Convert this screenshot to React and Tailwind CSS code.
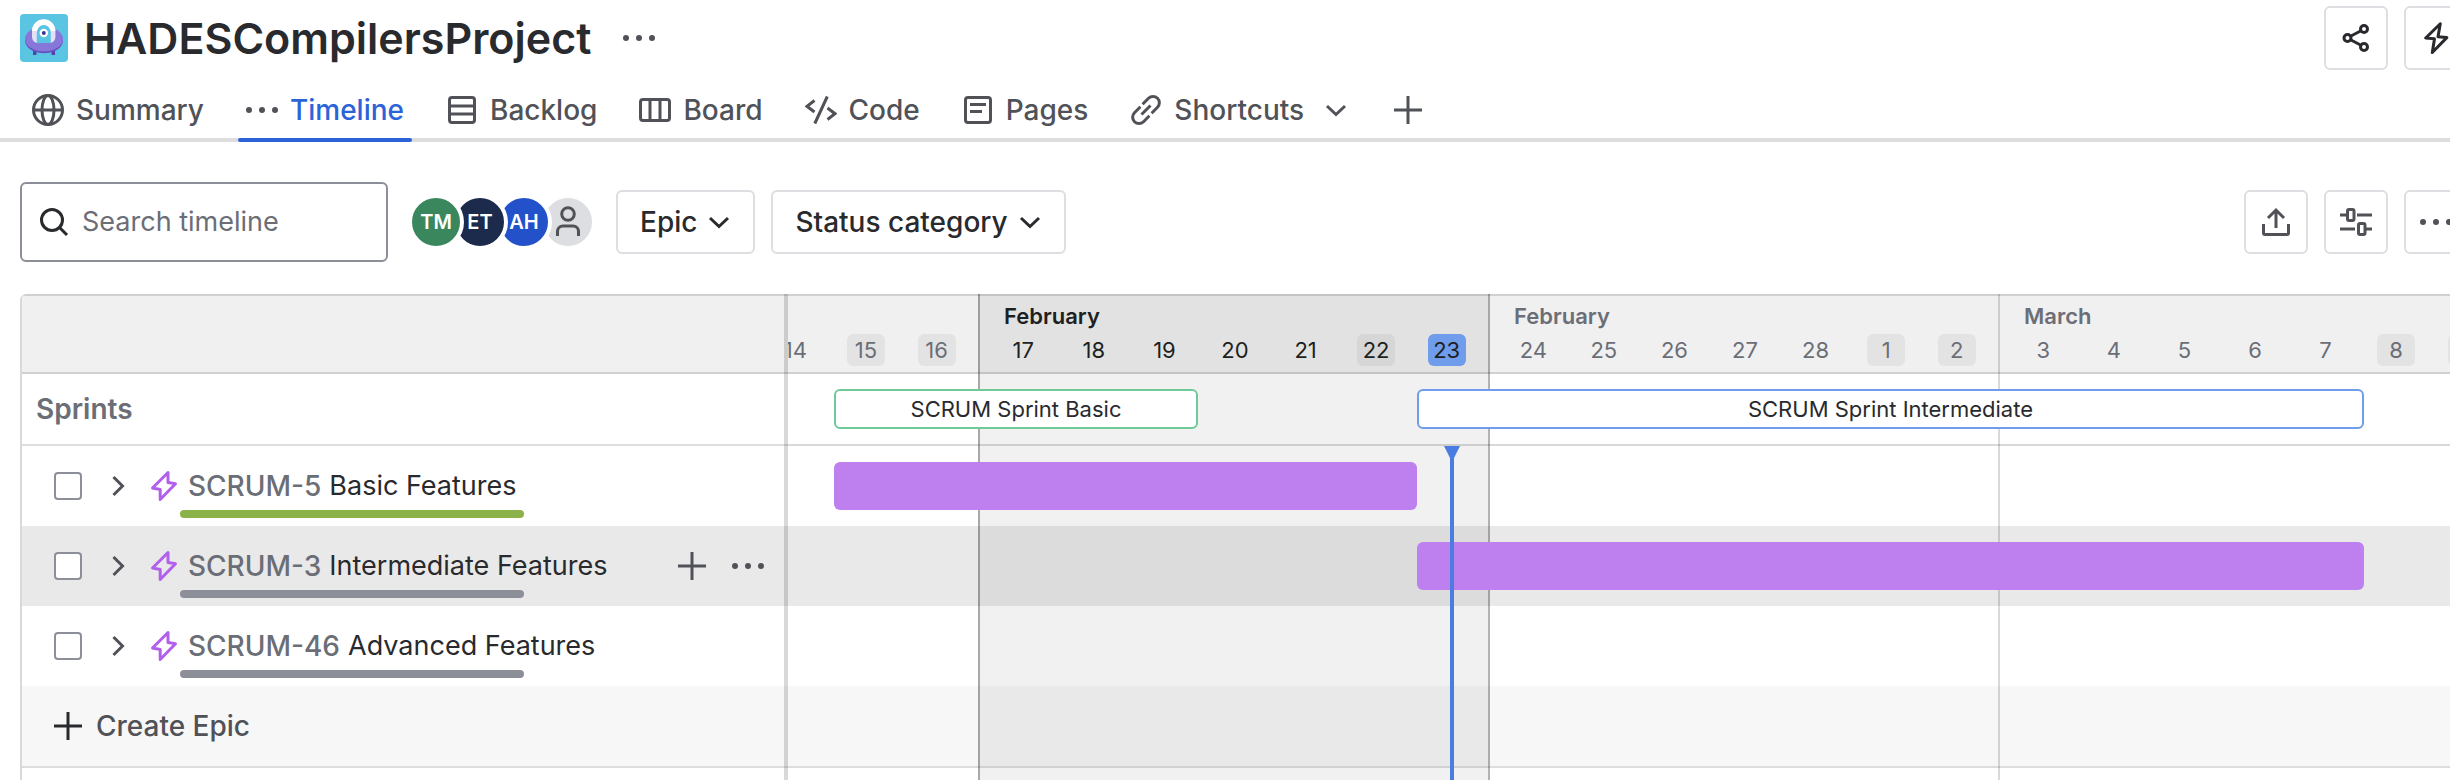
import React from "react";

function Icon({ children, size = "size-8", className = "" }) {
  return (
    <svg
      viewBox="0 0 32 32"
      fill="none"
      stroke="currentColor"
      strokeWidth="3"
      aria-hidden="true"
      className={`shrink-0 ${size} ${className}`}
    >
      {children}
    </svg>
  );
}

const Dots = (props) => (
  <Icon {...props}>
    <g fill="currentColor" stroke="none">
      <circle cx="3" cy="16" r="3" />
      <circle cx="16" cy="16" r="3" />
      <circle cx="29" cy="16" r="3" />
    </g>
  </Icon>
);

const Globe = () => (
  <Icon>
    <circle cx="16" cy="16" r="14.5" />
    <ellipse cx="16" cy="16" rx="6" ry="14.5" />
    <path d="M1.5 16h29" />
  </Icon>
);

const Backlog = () => (
  <Icon>
    <rect x="3.5" y="3.5" width="25" height="25" rx="2.5" />
    <path d="M3.5 12h25M3.5 20h25" />
  </Icon>
);

const Board = () => (
  <Icon>
    <rect x="1.5" y="5.5" width="29" height="21" rx="2.5" />
    <path d="M11 5.5v21M21 5.5v21" />
  </Icon>
);

const Code = () => (
  <Icon>
    <path d="M9.5 6.5L2 12.3l7.5 5.7M22.5 14l7.5 5.7-7.5 5.8M22.3 2.5L9.8 29.5" />
  </Icon>
);

const Pages = () => (
  <Icon>
    <rect x="3.5" y="3.5" width="25" height="25" rx="2.5" />
    <path d="M8 10.5h16M8 17.5h12" />
  </Icon>
);

const LinkIcon = () => (
  <Icon>
    <path d="M12.6 10.2l5.9-5.9a6.2 6.2 0 0 1 9 9l-5.9 5.9M19.4 21.8l-5.9 5.9a6.2 6.2 0 0 1-9-9l5.9-5.9M11.5 20.5l9-9" />
  </Icon>
);

const ChevronDown = ({ className }) => (
  <Icon className={className}>
    <path d="M7 12l9 8.5 9-8.5" />
  </Icon>
);

const ChevronRight = () => (
  <Icon>
    <path d="M11.5 7l9 9-9 9" />
  </Icon>
);

const Plus = ({ className }) => (
  <Icon className={className}>
    <path d="M16 2v28M2 16h28" />
  </Icon>
);

const Search = () => (
  <Icon className="text-[#292a2e]">
    <circle cx="14" cy="14" r="10.5" />
    <path d="M21.5 21.5l7.5 7.5" />
  </Icon>
);

const Person = () => (
  <Icon>
    <circle cx="16" cy="8" r="6.3" />
    <path d="M5.5 30v-4.5a5.5 5.5 0 0 1 5.5-5.5h10a5.5 5.5 0 0 1 5.5 5.5v4.5" />
  </Icon>
);

const Share = () => (
  <Icon>
    <circle cx="7.5" cy="16" r="3.5" />
    <circle cx="24" cy="7" r="3.5" />
    <circle cx="24" cy="25" r="3.5" />
    <path d="M10.5 14.3l10.5-5.6M10.5 17.7l10.5 5.6" />
  </Icon>
);

const BoltSquare = () => (
  <Icon>
    <path d="M20.3 1.7L5.7 16l8.8.8-2.2 13.7L26.8 15.6l-8.8-.9z" strokeLinejoin="round" />
  </Icon>
);

const EpicBolt = () => (
  <Icon className="text-[#b160ee]">
    <path d="M20 2.5L4.5 18l7.7 1.5v10L27.5 13.8 20 12.5z" strokeLinejoin="round" />
  </Icon>
);

const Export = () => (
  <Icon>
    <path d="M16 22V5M8 12l8-8 8 8M3.5 18v9a1.5 1.5 0 0 0 1.5 1.5h22a1.5 1.5 0 0 0 1.5-1.5v-9" />
  </Icon>
);

const Sliders = () => (
  <Icon>
    <path d="M0 9h7M17 9h15M0 23h15M25 23h7" />
    <rect x="7.5" y="3.5" width="6.5" height="11" rx="1.5" />
    <rect x="18.5" y="17.5" width="6.5" height="11" rx="1.5" />
  </Icon>
);

function ProjectLogo() {
  return (
    <svg viewBox="0 0 48 48" className="size-12 shrink-0 rounded" aria-hidden="true">
      <rect width="48" height="48" fill="#5ac4e3" />
      <path d="M13 35h3.5v6H13zM31.5 35H35v6h-3.5z" fill="#5243aa" />
      <ellipse cx="24" cy="26.5" rx="19" ry="12.8" fill="#6554c0" />
      <ellipse cx="24" cy="25" rx="19" ry="12.3" fill="#8777d9" />
      <path d="M12 17.5a11.7 11.7 0 0 1 23.4 0v5.5c0 3-2.5 6-6 6H18c-3.5 0-6-3-6-6z" fill="#e4e0f7" />
      <path d="M12 17a11.7 11.7 0 0 1 23.4 0z" fill="#fff" />
      <path d="M16.8 19a7 8 0 0 1 14 0v10h-14z" fill="#5ac4e3" />
      <circle cx="23.8" cy="19" r="4.2" fill="#fff" />
      <circle cx="23.8" cy="19" r="2" fill="#403294" />
    </svg>
  );
}

const TABS = [
  { label: "Summary", icon: <Globe /> },
  { label: "Timeline", icon: <Dots />, active: true },
  { label: "Backlog", icon: <Backlog /> },
  { label: "Board", icon: <Board /> },
  { label: "Code", icon: <Code /> },
  { label: "Pages", icon: <Pages /> },
  { label: "Shortcuts", icon: <LinkIcon />, menu: true },
];

const AVATARS = [
  { name: "TM", style: "z-40 bg-[#3b875d]" },
  { name: "ET", style: "z-30 bg-[#1c2b4b]" },
  { name: "AH", style: "z-20 bg-[#2251c9]" },
];

const WEEKS = [
  { month: "", days: [14, 15, 16], size: "w-[220px] pl-0.5", cols: "grid-cols-3", line: "border-transparent" },
  { month: "February", days: [17, 18, 19, 20, 21, 22, 23], size: "w-[510px] pl-2.5", cols: "grid-cols-7", current: true, line: "border-black/30" },
  { month: "February", days: [24, 25, 26, 27, 28, 1, 2], size: "w-[510px] pl-2.5", cols: "grid-cols-7", line: "border-black/30" },
  { month: "March", days: [3, 4, 5, 6, 7, 8, 9], size: "w-[510px] pl-2.5", cols: "grid-cols-7", line: "border-black/15" },
];

const TODAY = 23;
const DAY_WIDTH = 510 / 7;
// Day offsets are counted from Saturday the 15th, the first full day in view.
const FIRST_DAY_LEFT = 46;

const span = (start, days) => ({
  left: Math.round(FIRST_DAY_LEFT + start * DAY_WIDTH),
  width: Math.round(days * DAY_WIDTH),
});

const SPRINTS = [
  { name: "SCRUM Sprint Basic", start: 0, days: 5, border: "border-[#6fca98]" },
  { name: "SCRUM Sprint Intermediate", start: 8, days: 13, border: "border-[#6f9ceb]" },
];

const EPICS = [
  { id: "SCRUM-5", title: "Basic Features", start: 0, days: 8, progress: "bg-[#8bb349]" },
  { id: "SCRUM-3", title: "Intermediate Features", start: 8, days: 13, progress: "bg-[#8c8f97]", hovered: true },
  { id: "SCRUM-46", title: "Advanced Features", progress: "bg-[#8c8f97]" },
];

function IconButton({ label, className = "", children }) {
  return (
    <button
      type="button"
      aria-label={label}
      className={`flex size-16 shrink-0 items-center justify-center rounded-md border-2 border-[#dddee1] ${className}`}
    >
      {children}
    </button>
  );
}

function FilterButton({ children }) {
  return (
    <button
      type="button"
      className="flex h-16 items-center gap-1.5 rounded-md border-2 border-[#dddee1] pr-[18px] pl-[22px] font-medium whitespace-nowrap text-[#292a2e]"
    >
      {children}
      <ChevronDown />
    </button>
  );
}

function Header() {
  return (
    <header>
      <div className="flex h-[76px] items-center justify-between pl-5">
        <div className="flex items-center">
          <ProjectLogo />
          <h1 className="ml-4 text-[43px] leading-none font-semibold text-[#292a2e]">HADESCompilersProject</h1>
          <button type="button" aria-label="Project actions" className="ml-8 flex text-[#505258]">
            <Dots />
          </button>
        </div>
        <div className="-mr-[18px] flex gap-4 text-[#292a2e]">
          <IconButton label="Share">
            <Share />
          </IconButton>
          <IconButton label="Automation">
            <BoltSquare />
          </IconButton>
        </div>
      </div>
      <nav className="flex h-[66px] gap-[26px] border-b-4 border-[#dddddd] pt-1.5 pl-6" aria-label="Project views">
        {TABS.map((tab) => (
          <a
            key={tab.label}
            href="#"
            aria-current={tab.active ? "page" : undefined}
            className={`relative flex items-center gap-3 px-2 font-medium ${tab.active ? "text-[#2d63d8]" : "text-[#505258]"}`}
          >
            <span className="text-[#505258]">{tab.icon}</span>
            {tab.label}
            {tab.menu && <ChevronDown className="mr-1.5 ml-1" />}
            {tab.active && <span className="absolute inset-x-0 -bottom-1 h-1 rounded-full bg-[#2d63d8]" />}
          </a>
        ))}
        <button type="button" aria-label="Add view" className="text-[#505258]">
          <Plus />
        </button>
      </nav>
    </header>
  );
}

function Toolbar() {
  return (
    <div className="flex items-center justify-between pt-10 pb-8 pl-5">
      <div className="flex items-center">
        <label className="flex h-20 w-[368px] items-center gap-2 rounded-md border-2 border-[#8c8f97] px-4 focus-within:border-[#2d63d8]">
          <Search />
          <input
            type="text"
            aria-label="Search timeline"
            placeholder="Search timeline"
            className="w-full min-w-0 pl-1 text-[27px] outline-none placeholder:text-[#6b6e76]"
          />
        </label>
        <div className="ml-5 flex -space-x-3">
          {AVATARS.map((a) => (
            <button
              key={a.name}
              type="button"
              className={`relative flex size-14 items-center justify-center rounded-full border-4 border-white text-[20px] leading-none font-semibold text-white ${a.style}`}
            >
              {a.name}
            </button>
          ))}
          <button
            type="button"
            aria-label="Unassigned"
            className="relative z-10 flex size-14 items-center justify-center rounded-full border-4 border-white bg-[#dddee1] text-[#505258]"
          >
            <Person />
          </button>
        </div>
        <div className="ml-5 flex gap-4">
          <FilterButton>Epic</FilterButton>
          <FilterButton>Status category</FilterButton>
        </div>
      </div>
      <div className="-mr-[18px] flex gap-4 text-[#505258]">
        <IconButton label="Export">
          <Export />
        </IconButton>
        <IconButton label="View settings">
          <Sliders />
        </IconButton>
        <IconButton label="More">
          <Dots />
        </IconButton>
      </div>
    </div>
  );
}

function EpicItem({ epic }) {
  return (
    <div className={`flex h-20 items-center pr-6 pl-8 ${epic.hovered ? "bg-[#e9e9e9]" : ""}`}>
      <input
        type="checkbox"
        aria-label={`Select ${epic.id}`}
        className="size-7 shrink-0 appearance-none rounded border-2 border-[#8c8f97] bg-white checked:bg-[#2d63d8]"
      />
      <button type="button" aria-label={`Expand ${epic.id}`} className="ml-5 text-[#505258]">
        <ChevronRight />
      </button>
      <span className="ml-3.5">
        <EpicBolt />
      </span>
      <div className="relative ml-2 flex h-20 items-center gap-2 whitespace-nowrap">
        <a href="#" className="font-medium text-[#6b6e76]">
          {epic.id}
        </a>
        <span className="text-[27px] text-[#292a2e]">{epic.title}</span>
        <span className={`absolute bottom-2 -left-2 h-2 w-[344px] rounded-full ${epic.progress}`} />
      </div>
      {epic.hovered && (
        <div className="ml-auto flex gap-6 text-[#505258]">
          <button type="button" aria-label="Add child">
            <Plus />
          </button>
          <button type="button" aria-label="Epic actions">
            <Dots />
          </button>
        </div>
      )}
    </div>
  );
}

function Sidebar() {
  return (
    <div className="w-[768px] shrink-0 overflow-hidden rounded-tl-md border-l-2 border-black/15">
      <div className="h-20 border-y-2 border-[#d0d0d0] bg-[#f0f0f0]" />
      <div className="flex h-[72px] items-center border-b-2 border-[#dddddd] pl-3.5 font-semibold text-[#6b6e76]">
        Sprints
      </div>
      {EPICS.map((epic) => (
        <EpicItem key={epic.id} epic={epic} />
      ))}
      <button
        type="button"
        className="flex h-[82px] w-full items-center gap-3 border-b-2 border-[#dddddd] bg-[#f7f7f7] pl-[30px] font-medium text-[#505258]"
      >
        <Plus className="text-[#292a2e]" />
        Create Epic
      </button>
      <div className="h-20" />
    </div>
  );
}

function dayStyle(day, index, week) {
  if (week.current && day === TODAY) return "bg-[#6f9ceb]";
  return index >= week.days.length - 2 ? "bg-black/5" : "";
}

function Chart() {
  return (
    <div className="relative min-w-0 flex-1 overflow-hidden">
      <div className="pointer-events-none absolute inset-0 -ml-[30px] flex">
        {WEEKS.map((week, i) => (
          <div
            key={i}
            className={`shrink-0 border-l-2 ${week.size} ${week.line} ${week.current ? "bg-[#091420]/6" : ""}`}
          />
        ))}
      </div>

      <div className="h-20 overflow-hidden border-y-2 border-[#d0d0d0] bg-[#f0f0f0]">
        <div className="relative z-10 -ml-[30px] flex">
          {WEEKS.map((week, i) => (
            <div
              key={i}
              className={`shrink-0 pr-1.5 text-[22px] ${week.size} ${week.current ? "text-[#1e1f21]" : "text-[#6b6e76]"}`}
            >
              <div className="mt-1 mb-0.5 h-8 pl-4 leading-8 font-semibold">{week.month}</div>
              <div className={`grid justify-items-center ${week.cols}`}>
                {week.days.map((day, d) => (
                  <span
                    key={day}
                    className={`w-[38px] rounded-md text-center leading-8 ${dayStyle(day, d, week)}`}
                  >
                    {day}
                  </span>
                ))}
              </div>
            </div>
          ))}
        </div>
      </div>

      <div className="relative h-[72px] border-b-2 border-black/15">
        {SPRINTS.map((s) => (
          <div
            key={s.name}
            style={span(s.start, s.days)}
            className={`absolute top-[15px] z-10 flex h-10 items-center justify-center rounded-md border-2 bg-white text-[22px] whitespace-nowrap text-[#292a2e] ${s.border}`}
          >
            {s.name}
          </div>
        ))}
      </div>

      <div>
        {EPICS.map((epic) => (
          <div key={epic.id} className={`h-20 pt-4 ${epic.hovered ? "bg-[#e9e9e9]" : ""}`}>
            {epic.days && (
              <div
                style={{
                  marginLeft: span(epic.start, epic.days).left,
                  width: span(epic.start, epic.days).width,
                }}
                className="relative z-10 h-12 rounded-md bg-[#be80ee]"
              />
            )}
          </div>
        ))}
      </div>
      <div className="h-[82px] border-b-2 border-[#dddddd] bg-[#f7f7f7]" />

      <svg className="absolute top-[152px] left-[656px] z-20 h-3 w-4" viewBox="0 0 16 12" aria-hidden="true">
        <path d="M0 0h16L10 12H6z" fill="#4a7de2" />
      </svg>
      <div className="absolute top-[152px] bottom-0 left-[662px] z-20 w-1 bg-[#4a7de2]" />
    </div>
  );
}

export default function App() {
  return (
    <div className="h-screen overflow-hidden bg-white font-['Inter','Liberation_Sans',sans-serif] text-[28px] leading-8 text-[#292a2e]">
      <Header />
      <Toolbar />
      <main className="relative ml-5 flex">
        <Sidebar />
        <div className="absolute inset-y-0 left-[764px] z-10 w-1 bg-black/15" />
        <Chart />
      </main>
    </div>
  );
}
